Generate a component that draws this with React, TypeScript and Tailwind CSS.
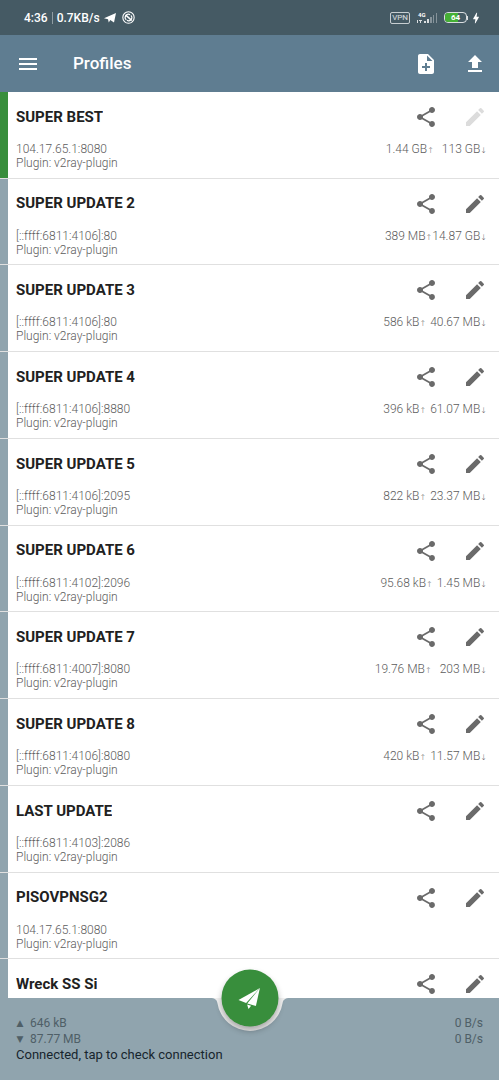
import { MdBolt, MdEdit, MdMenu, MdNoteAdd, MdShare, MdUpload } from "react-icons/md"

interface Profile {
  name: string
  address?: string
  tx?: string
  rx?: string
  gap?: string
  selected?: boolean
}

const profiles: Profile[] = [
  { name: "SUPER BEST", address: "104.17.65.1:8080", tx: "1.44 GB", rx: "113 GB", gap: "gap-2", selected: true },
  { name: "SUPER UPDATE 2", address: "[::ffff:6811:4106]:80", tx: "389 MB", rx: "14.87 GB", gap: "gap-0" },
  { name: "SUPER UPDATE 3", address: "[::ffff:6811:4106]:80", tx: "586 kB", rx: "40.67 MB", gap: "gap-1" },
  { name: "SUPER UPDATE 4", address: "[::ffff:6811:4106]:8880", tx: "396 kB", rx: "61.07 MB", gap: "gap-1" },
  { name: "SUPER UPDATE 5", address: "[::ffff:6811:4106]:2095", tx: "822 kB", rx: "23.37 MB", gap: "gap-1" },
  { name: "SUPER UPDATE 6", address: "[::ffff:6811:4102]:2096", tx: "95.68 kB", rx: "1.45 MB", gap: "gap-1" },
  { name: "SUPER UPDATE 7", address: "[::ffff:6811:4007]:8080", tx: "19.76 MB", rx: "203 MB", gap: "gap-2" },
  { name: "SUPER UPDATE 8", address: "[::ffff:6811:4106]:8080", tx: "420 kB", rx: "11.57 MB", gap: "gap-1" },
  { name: "LAST UPDATE", address: "[::ffff:6811:4103]:2086" },
  { name: "PISOVPNSG2", address: "104.17.65.1:8080" },
  { name: "Wreck SS Si" },
]

const PlaneIcon = ({ className }: { className: string }) => (
  <svg viewBox="0 0 24 24" className={className} fill="currentColor" aria-hidden="true">
    <path d="M1 13.6 22.4 1.600 8.600 16.600z" />
    <path d="M22.4 1.600 18.4 19.400 9.800 17z" />
    <path d="M9.600 18 13.600 19.200 11 22.600z" />
  </svg>
)

const StatusBar = () => (
  <div className="flex items-center justify-between h-[35px] pl-6 pr-4 bg-[#455a64] text-white">
    <div className="flex items-center text-xs font-medium">
      <span>4:36</span>
      <span className="w-px h-3 mx-1 bg-white/40" />
      <span>0.7KB/s</span>
      <svg viewBox="0 0 24 20" className="w-3 ml-1 h-2.5" fill="currentColor" aria-hidden="true">
        <path d="M0 10.500 24 0 20 19 12.500 14 9.500 19 8 12.500z" />
      </svg>
      <svg viewBox="0 0 24 24" className="ml-1.5 size-[13px]" fill="none" stroke="currentColor" strokeWidth="2" aria-hidden="true">
        <circle cx="12" cy="12" r="10.5" />
        <path d="M8 16.500A6 6 0 0 1 15 6.800M16.500 8A6 6 0 0 1 9 17.200" />
        <path d="M6.500 7 18 17.500" strokeWidth="3" />
      </svg>
    </div>
    <div className="flex items-center">
      <span className="px-px text-[8px] leading-[10px] border rounded-xs border-white/70 text-white/80">VPN</span>
      <svg viewBox="0 0 22 14" className="h-3.5 ml-1.5 w-[22px]" fill="currentColor" aria-hidden="true">
        <text x="2" y="6" fontSize="6" fontWeight="700">4G</text>
        <path d="M1 9h1v3H1zM3 9h3v1H5v2H4v-2H3zM8 10h2v2H8zM11 8h2v4h-2z" opacity=".8" />
        <path d="M14 6h2v6h-2zM17 4h1v8h-1zM20 2h1v10h-1z" opacity=".35" />
      </svg>
      <div className="flex items-center ml-1.5">
        <div className="relative flex items-center justify-center h-[11px] w-[23px] overflow-hidden border rounded-sm border-white/80">
          <div className="absolute inset-y-0 left-0 bg-[#45b035] w-[64%]" />
          <span className="relative text-[8px] font-bold leading-none">64</span>
        </div>
        <div className="w-px h-1 bg-white/80" />
      </div>
      <MdBolt size={14} className="ml-px" />
    </div>
  </div>
)

const ProfileRow = ({ profile }: { profile: Profile }) => (
  <li className="flex border-b border-[#e0e0e0]">
    <div className={profile.selected ? "w-2 bg-[#388e3c]" : "w-2 bg-[#90a4ae]"} />
    <div className="flex-1 min-w-0 pt-3 pl-2 pr-3">
      <div className="flex items-center justify-between h-[26px]">
        <h2 className="text-[15px] font-bold text-[#212121] truncate">{profile.name}</h2>
        <div className="flex gap-[25px] text-[#6a6a6a]">
          <button type="button" aria-label="Share">
            <MdShare size={24} />
          </button>
          <button type="button" aria-label="Edit" disabled={profile.selected} className="disabled:text-[#dcdcdc]">
            <MdEdit size={24} />
          </button>
        </div>
      </div>
      {profile.address && (
        <div className="flex justify-between mt-3 text-xs font-light leading-[14px] text-[#5c5c5c]">
          <div>
            <p>{profile.address}</p>
            <p>Plugin: v2ray-plugin</p>
          </div>
          {profile.tx && (
            <p className={`flex ${profile.gap}`}>
              <span>{profile.tx}<span className="text-[8px]">↑</span></span>
              <span>{profile.rx}<span className="text-[8px]">↓</span></span>
            </p>
          )}
        </div>
      )}
    </div>
  </li>
)

const BottomBar = () => (
  <footer className="relative z-10 px-4 pt-[17px] pb-[17px] bg-[#90a4ae]">
    {/* cradle cut out around the connect button */}
    <svg viewBox="0 0 90 40" className="absolute top-0 w-[90px] h-10 -translate-x-1/2 left-1/2" aria-hidden="true">
      <path d="M5 0C10 0 12 2 12.400 5A33 33 0 0 0 77.600 5C78 2 80 0 85 0Z" fill="#f0f0f0" />
    </svg>
    <button
      type="button"
      aria-label="Disconnect"
      className="absolute top-0 flex items-center justify-center text-white -translate-x-1/2 -translate-y-1/2 bg-[#388e3c] rounded-full shadow-[0_4px_6px_rgba(0,0,0,0.3)] left-1/2 size-[57px]"
    >
      <PlaneIcon className="size-6" />
    </button>
    <div className="flex justify-between text-xs leading-4 text-[#4f5f67]">
      <div>
        <p className="flex gap-1.5"><span className="w-2 text-[9px] text-center">▲</span>646 kB</p>
        <p className="flex gap-1.5"><span className="w-2 text-[9px] text-center">▼</span>87.77 MB</p>
      </div>
      <div className="text-right">
        <p>0 B/s</p>
        <p>0 B/s</p>
      </div>
    </div>
    <button type="button" className="block text-[13px] leading-4 text-[#17252d]">
      Connected, tap to check connection
    </button>
  </footer>
)

const App = () => {
  return (
    <div className="flex flex-col w-full min-h-screen bg-white font-[Roboto,'DejaVu_Sans',sans-serif]">
      <StatusBar />
      <header className="flex items-center px-4 text-white h-[57px] bg-[#5f7d91]">
        <button type="button" aria-label="Menu">
          <MdMenu size={24} />
        </button>
        <h1 className="flex-1 ml-[33px] text-[17px] font-medium">Profiles</h1>
        <div className="flex gap-[25px] -mr-1">
          <button type="button" aria-label="Add profile">
            <MdNoteAdd size={24} />
          </button>
          <button type="button" aria-label="Upload">
            <MdUpload size={24} />
          </button>
        </div>
      </header>
      {/* the last row slides under the bottom bar */}
      <main className="flex flex-col flex-1 -mb-12">
        <ul className="grid flex-1 auto-rows-fr">
          {profiles.map((profile) => (
            <ProfileRow key={profile.name} profile={profile} />
          ))}
        </ul>
      </main>
      <BottomBar />
    </div>
  )
}

export default App
